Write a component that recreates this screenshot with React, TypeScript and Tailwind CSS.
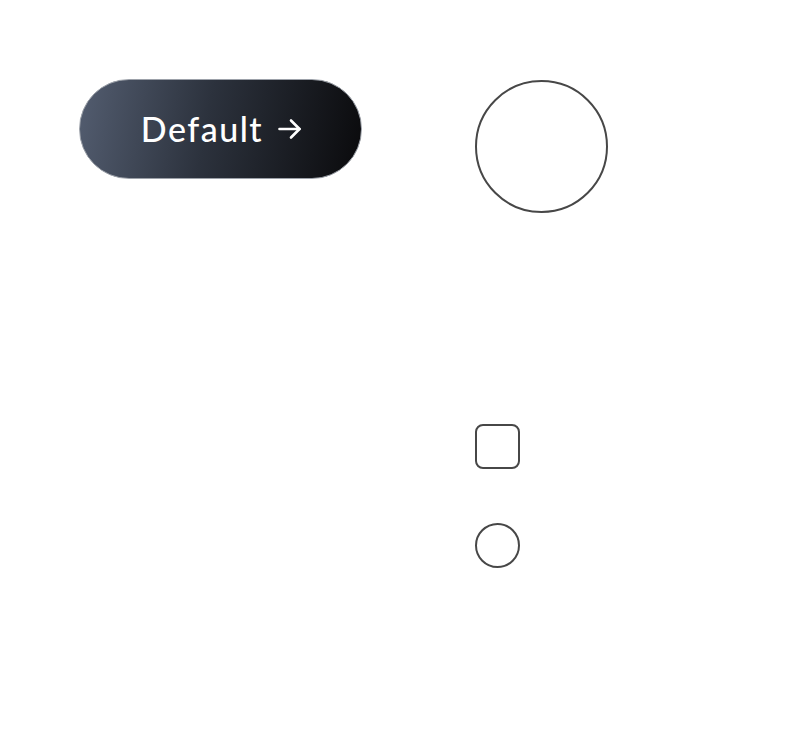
export default function App() {
  return (
    <div className="min-h-[738px] w-[800px] bg-white" style={{ fontFamily: "Lato, 'Noto Sans', sans-serif" }}>
      <div className="flex pt-[79px] pl-[79px]">
        <div className="w-[396px]">
          <button className="flex h-[100px] w-[283px] items-center justify-center gap-[14px] rounded-full border-[1.5px] border-[#9ca1a9] bg-[linear-gradient(100deg,#535d70_0%,#2c323d_45%,#0a0a0c_100%)] pl-[2px] text-white">
            <span className="text-[34px] font-medium tracking-[1.5px] leading-none">Default</span>
            <svg width="25" height="24" viewBox="0 0 25 24" fill="none" stroke="white" strokeWidth="2.6" strokeLinecap="round" strokeLinejoin="round">
              <path d="M2.5 12h20" />
              <path d="M14 3.5l8.5 8.5-8.5 8.5" />
            </svg>
          </button>
        </div>
        <div className="flex flex-col pt-[1px]">
          <div className="h-[133px] w-[133px] rounded-full border-2 border-[#474747]" />
          <div className="mt-[211px] h-[45px] w-[45px] rounded-[8px] border-2 border-[#474747]" />
          <div className="mt-[54px] h-[45px] w-[45px] rounded-full border-2 border-[#474747]" />
        </div>
      </div>
    </div>
  );
}
